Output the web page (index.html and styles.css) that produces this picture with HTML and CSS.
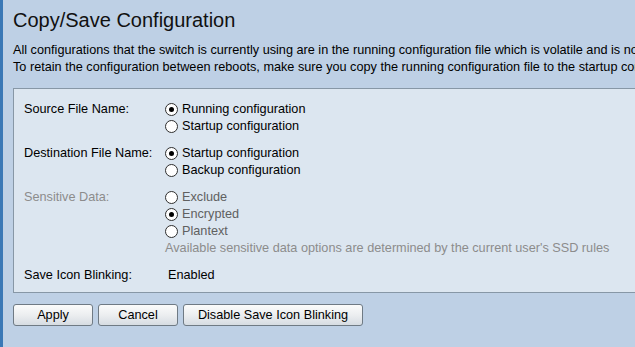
FILE: index.html
```html
<!DOCTYPE html>
<html lang="en">
<head>
    <meta charset="UTF-8">
    <title>Copy/Save Configuration</title>
    <link rel="stylesheet" href="styles.css">
</head>
<body>
    <div class="page">
        <h1>Copy/Save Configuration</h1>
        <p class="intro">
            All configurations that the switch is currently using are in the running configuration file which is volatile and is not retained between reboots.<br>
            To retain the configuration between reboots, make sure you copy the running configuration file to the startup configuration file.
        </p>

        <div class="panel">
            <div class="row">
                <div class="label">Source File Name:</div>
                <div class="options">
                    <label class="opt"><input type="radio" name="src" checked> Running configuration</label>
                    <label class="opt"><input type="radio" name="src"> Startup configuration</label>
                </div>
            </div>
            <div class="row">
                <div class="label">Destination File Name:</div>
                <div class="options">
                    <label class="opt"><input type="radio" name="dst" checked> Startup configuration</label>
                    <label class="opt"><input type="radio" name="dst"> Backup configuration</label>
                </div>
            </div>
            <div class="row disabled">
                <div class="label">Sensitive Data:</div>
                <div class="options">
                    <label class="opt"><input type="radio" name="sd"> Exclude</label>
                    <label class="opt"><input type="radio" name="sd" checked> Encrypted</label>
                    <label class="opt"><input type="radio" name="sd"> Plantext</label>
                    <div class="note">Available sensitive data options are determined by the current user's SSD rules</div>
                </div>
            </div>
            <div class="row last">
                <div class="label">Save Icon Blinking:</div>
                <div class="options value">Enabled</div>
            </div>
        </div>

        <div class="buttons">
            <button class="btn">Apply</button>
            <button class="btn">Cancel</button>
            <button class="btn wide">Disable Save Icon Blinking</button>
        </div>
    </div>
</body>
</html>
```

FILE: styles.css
```css
:root {
    --page-bg: #bed0e5;
    --edge: #3a78b6;
    --panel-bg: #dce6f0;
    --panel-border: #8797a6;
    --text: #000000;
    --muted: #8c8c8c;
}

html, body {
    margin: 0;
    height: 100%;
}

body {
    font-family: Arial, "Liberation Sans", sans-serif;
    font-size: 12.7px;
    color: var(--text);
    background-color: var(--page-bg);
    border-left: 3px solid var(--edge);
    overflow: hidden;
}

.page {
    padding: 8px 0 0 10px;
    width: 720px;
}

h1 {
    font-size: 20px;
    font-weight: normal;
    color: #111;
    margin: 0 0 10px 0;
    line-height: 24px;
    white-space: nowrap;
}

.intro {
    margin: 0;
    line-height: 17px;
    white-space: nowrap;
}

.panel {
    margin-top: 12px;
    background-color: var(--panel-bg);
    border: 1px solid var(--panel-border);
    padding: 12px 10px 8px 10px;
}

.row {
    display: flex;
    line-height: 17px;
    margin-bottom: 10px;
}

.row.last {
    margin-bottom: 0;
    margin-top: 9px;
}

.label {
    width: 141px;
    flex-shrink: 0;
}

.options {
    display: flex;
    flex-direction: column;
}

.value {
    padding-left: 3px;
}

.opt {
    display: flex;
    align-items: center;
    height: 17px;
    white-space: nowrap;
}

.opt input {
    appearance: none;
    -webkit-appearance: none;
    width: 13px;
    height: 13px;
    margin: 0 4px 0 0;
    border: 1px solid #2e2e2e;
    border-radius: 50%;
    background-color: #fff;
    position: relative;
}

.opt input:checked::after {
    content: "";
    position: absolute;
    left: 3px;
    top: 3px;
    width: 5px;
    height: 5px;
    border-radius: 50%;
    background-color: #000;
}

.disabled .opt {
    color: #606060;
}

.disabled .label {
    color: var(--muted);
}

.note {
    color: var(--muted);
    white-space: nowrap;
}

.buttons {
    display: flex;
    gap: 5px;
    margin-top: 11px;
}

.btn {
    font-family: Arial, "Liberation Sans", sans-serif;
    font-size: 12.7px;
    color: #000;
    width: 80px;
    height: 22px;
    padding: 0;
    border: 1px solid #6f7a84;
    border-radius: 3px;
    background: linear-gradient(to bottom, #fbfbfb 0%, #eceef0 50%, #d6dce2 100%);
    cursor: pointer;
}

.btn.wide {
    width: 180px;
}
```
